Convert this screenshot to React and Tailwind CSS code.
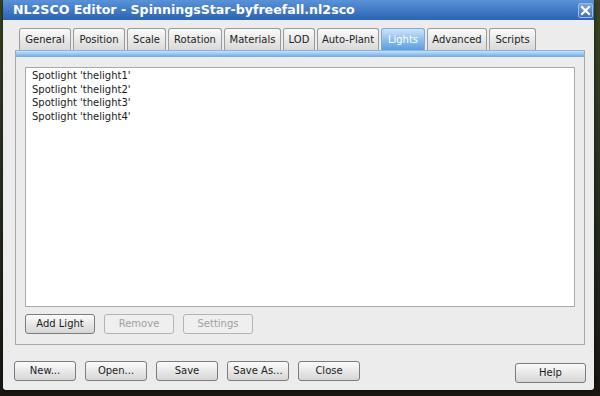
import React from 'react';

const tabs = [
  { name: 'General', w: 'w-[52px]' },
  { name: 'Position', w: 'w-[52px]' },
  { name: 'Scale', w: 'w-[39px]' },
  { name: 'Rotation', w: 'w-[54px]' },
  { name: 'Materials', w: 'w-[57px]' },
  { name: 'LOD', w: 'w-[32px]' },
  { name: 'Auto-Plant', w: 'w-[62px]' },
  { name: 'Lights', w: 'w-[44px]', active: true },
  { name: 'Advanced', w: 'w-[60px]' },
  { name: 'Scripts', w: 'w-[47px]' },
];

const lights = ['thelight1', 'thelight2', 'thelight3', 'thelight4'];

const Btn = ({ children, w = 'w-[62px]', disabled }) => (
  <button
    className={`${w} h-[20px] rounded-[3px] border text-[10px] leading-none ${
      disabled
        ? 'border-[#b4b4b4] text-[#a0a0a0] bg-[#efefef]'
        : 'border-[#7c7c7c] text-[#1c1c1c] bg-gradient-to-b from-[#fbfbfb] to-[#d6d6d6]'
    }`}
  >
    {children}
  </button>
);

const App = () => {
  return (
    <div
      className="w-[600px] h-[396px] overflow-hidden bg-gradient-to-b from-[#3a4424] via-[#24301c] to-[#1a1612] pl-[3px]"
      style={{ fontFamily: '"DejaVu Sans", Verdana, sans-serif' }}
    >
      <div className="w-[591px] h-[390px] bg-[#ececec] rounded-b-[3px] shadow-[0_0_4px_rgba(0,0,0,0.6)] flex flex-col">
        {/* title bar */}
        <div className="h-[20px] flex items-center justify-between bg-gradient-to-b from-[#5a92d8] to-[#2c63b3] pl-[10px] pr-[1px]">
          <span className="text-white font-bold text-[12.6px]">
            NL2SCO Editor - SpinningsStar-byfreefall.nl2sco
          </span>
          <div className="w-[15px] h-[15px] rounded-[2px] bg-gradient-to-b from-[#7aa6dc] to-[#3b6fb8] border border-[#9dbde6] flex items-center justify-center">
            <svg width="11" height="11" viewBox="0 0 11 11">
              <path d="M2 2 L9 9 M9 2 L2 9" stroke="white" strokeWidth="2.2" strokeLinecap="square" />
            </svg>
          </div>
        </div>

        <div className="flex-1 flex flex-col px-[12px] pt-[8px]">
          {/* tabs */}
          <div className="flex gap-[2px] pl-[4px] items-end h-[22px]">
            {tabs.map((t) => (
              <div
                key={t.name}
                className={`${t.w} h-[22px] flex items-center justify-center rounded-t-[3px] border border-b-0 text-[10px] ${
                  t.active
                    ? 'border-[#7fa9d8] text-white bg-gradient-to-b from-[#cfe4f8] via-[#8fbfec] to-[#5a9ee0]'
                    : 'border-[#9a9a9a] text-[#222] bg-gradient-to-b from-[#fafafa] to-[#d9d9d9]'
                }`}
              >
                {t.name}
              </div>
            ))}
          </div>

          {/* panel */}
          <div className="w-[570px] h-[295px] border border-[#a8a8a8] border-t-0 flex flex-col">
            <div className="h-[7px] bg-gradient-to-b from-[#c9e1f7] to-[#6aa8e3] border-t border-[#8ab4e0]" />
            <div className="flex-1 flex flex-col px-[9px] pt-[10px]">
              <div className="w-[550px] h-[240px] bg-white border border-[#a9a9a9] pl-[6px] pt-[1px]">
                {lights.map((l) => (
                  <div key={l} className="text-[10px] leading-[13.5px] text-[#1a1a1a]">
                    Spotlight '{l}'
                  </div>
                ))}
              </div>
              <div className="flex gap-[9px] mt-[7px]">
                <Btn w="w-[70px]">Add Light</Btn>
                <Btn w="w-[70px]" disabled>Remove</Btn>
                <Btn w="w-[70px]" disabled>Settings</Btn>
              </div>
            </div>
          </div>

          {/* bottom buttons */}
          <div className="flex items-center mt-[14px]">
            <div className="flex gap-[9px] -ml-[1px]">
              <Btn>New...</Btn>
              <Btn>Open...</Btn>
              <Btn>Save</Btn>
              <Btn>Save As...</Btn>
              <Btn>Close</Btn>
            </div>
            <div className="ml-auto -mr-[4px]">
              <Btn w="w-[71px]">Help</Btn>
            </div>
          </div>
        </div>
      </div>
    </div>
  );
};

export default App;
